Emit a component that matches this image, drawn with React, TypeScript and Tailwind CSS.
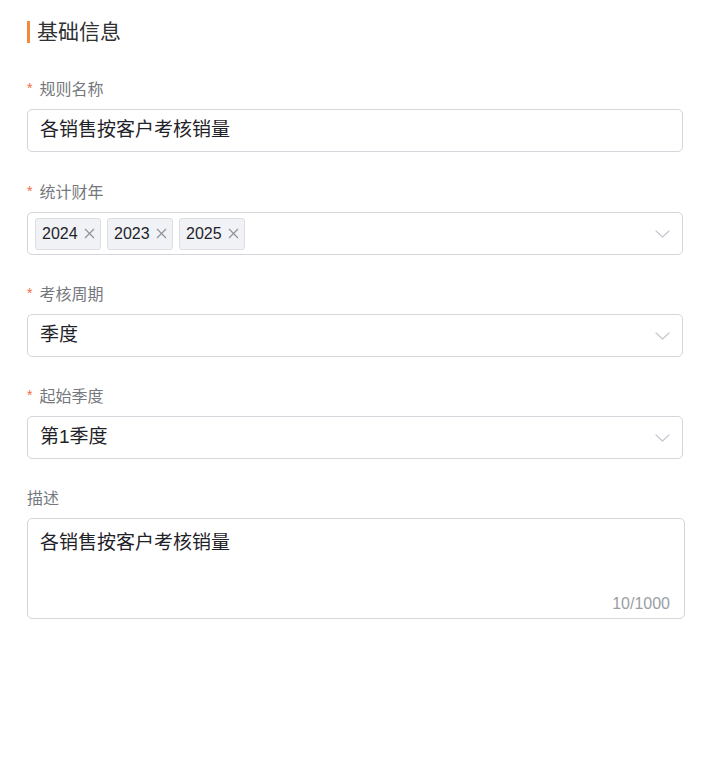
import React from "react";

const font = { fontFamily: '"Liberation Sans", "Noto Sans CJK SC", sans-serif' };

function Chevron() {
  return (
    <svg width="15" height="8" viewBox="0 0 15 8" fill="none" className="shrink-0">
      <path d="M1 1 L7.5 7 L14 1" stroke="#c5c8ce" strokeWidth="1.2" strokeLinecap="round" strokeLinejoin="round" />
    </svg>
  );
}

function Cross() {
  return (
    <svg width="11" height="11" viewBox="0 0 11 11" fill="none">
      <path d="M1 1 L10 10 M10 1 L1 10" stroke="#8a8f99" strokeWidth="1.1" />
    </svg>
  );
}

function Label({ text, required = true }: { text: string; required?: boolean }) {
  return (
    <div className="flex items-center h-[20px] mb-[9px] text-[16px] leading-[20px] text-[#75787d]">
      {required && <span className="text-[#f26b3a] text-[14px] mr-[7px] -mt-[4px]">*</span>}
      <span>{text}</span>
    </div>
  );
}

function Tag({ text }: { text: string }) {
  return (
    <div className="flex items-center h-[32px] w-[66px] pl-[6px] gap-[6px] bg-[#f1f2f5] border border-[#dcdee3] rounded-[3px] text-[16px] text-[#1f2329]">
      <span>{text}</span>
      <Cross />
    </div>
  );
}

export default function App() {
  return (
    <div className="w-[720px] h-[776px] bg-white" style={font}>
      <div className="pl-[27px] pt-[21px]">
        <div className="flex items-center h-[22px] mb-[37px]">
          <div className="w-[3px] h-[22px] bg-[#f28a3d]" />
          <div className="ml-[7px] text-[21px] leading-[22px] text-[#2f3133]">基础信息</div>
        </div>

        <div className="mb-[31px]">
          <Label text="规则名称" />
          <div className="w-[656px] h-[43px] border border-[#d4d6db] rounded-[5px] flex items-center px-[12px] text-[19px] text-[#1f2329]">
            各销售按客户考核销量
          </div>
        </div>

        <div className="mb-[30px]">
          <Label text="统计财年" />
          <div className="w-[656px] h-[43px] border border-[#d4d6db] rounded-[5px] flex items-center pl-[7px] pr-[12px]">
            <div className="flex items-center gap-[6px] flex-1">
              <Tag text="2024" />
              <Tag text="2023" />
              <Tag text="2025" />
            </div>
            <Chevron />
          </div>
        </div>

        <div className="mb-[30px]">
          <Label text="考核周期" />
          <div className="w-[656px] h-[43px] border border-[#d4d6db] rounded-[5px] flex items-center pl-[12px] pr-[12px] text-[19px] text-[#1f2329]">
            <span className="flex-1">季度</span>
            <Chevron />
          </div>
        </div>

        <div className="mb-[30px]">
          <Label text="起始季度" />
          <div className="w-[656px] h-[43px] border border-[#d4d6db] rounded-[5px] flex items-center pl-[12px] pr-[12px] text-[19px] text-[#1f2329]">
            <span className="flex-1">第1季度</span>
            <Chevron />
          </div>
        </div>

        <div>
          <Label text="描述" required={false} />
          <div className="w-[658px] h-[101px] border border-[#d4d6db] rounded-[5px] flex flex-col pl-[12px] pr-[14px] pt-[11px] pb-[4px]">
            <div className="flex-1 text-[19px] leading-[26px] text-[#1f2329]">各销售按客户考核销量</div>
            <div className="text-right text-[16px] leading-[20px] text-[#9a9da3]">10/1000</div>
          </div>
        </div>
      </div>
    </div>
  );
}
